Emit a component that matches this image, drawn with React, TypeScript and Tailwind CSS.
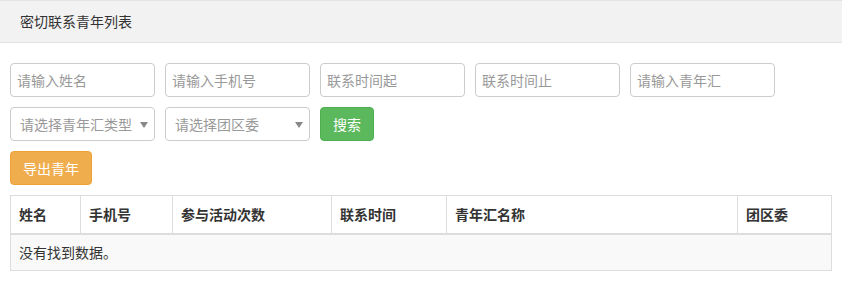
import React from "react";

const font = { fontFamily: '"Noto Sans CJK SC", "Liberation Sans", sans-serif' };

function TextBox({ placeholder }: { placeholder: string }) {
  return (
    <input
      type="text"
      placeholder={placeholder}
      className="h-[34px] w-[145px] rounded-[4px] border border-[#ccc] bg-white px-[6px] text-[14px] text-[#555] outline-none placeholder:text-[#999]"
    />
  );
}

function SelectBox({ label }: { label: string }) {
  return (
    <div className="flex h-[34px] w-[145px] items-center justify-between rounded-[4px] border border-[#ccc] bg-white pl-[9px] pr-[6px] text-[14px] text-[#999]">
      <span>{label}</span>
      <svg width="8" height="6" viewBox="0 0 8 6" className="mt-[1px]">
        <path d="M0 0h8L4 6z" fill="#888" />
      </svg>
    </div>
  );
}

const columns = [
  { title: "姓名", w: "w-[70px]" },
  { title: "手机号", w: "w-[92px]" },
  { title: "参与活动次数", w: "w-[159px]" },
  { title: "联系时间", w: "w-[115px]" },
  { title: "青年汇名称", w: "w-[291px]" },
  { title: "团区委", w: "" },
];

export default function App() {
  return (
    <div className="h-[283px] w-[842px] bg-white text-[14px] text-[#333]" style={font}>
      <div className="flex h-[43px] items-center border-b border-t border-[#e3e3e3] bg-[#f2f2f2] px-5">
        密切联系青年列表
      </div>

      <div className="flex flex-col gap-[10px] px-[10px] pt-5">
        <div className="flex gap-[10px]">
          <TextBox placeholder="请输入姓名" />
          <TextBox placeholder="请输入手机号" />
          <TextBox placeholder="联系时间起" />
          <TextBox placeholder="联系时间止" />
          <TextBox placeholder="请输入青年汇" />
        </div>
        <div className="flex gap-[10px]">
          <SelectBox label="请选择青年汇类型" />
          <SelectBox label="请选择团区委" />
          <button className="h-[34px] w-[54px] rounded-[4px] border border-[#4cae4c] bg-[#5cb85c] text-[14px] text-white">
            搜索
          </button>
        </div>
        <div>
          <button className="h-[34px] w-[82px] rounded-[4px] border border-[#eea236] bg-[#f0ad4e] text-[14px] text-white">
            导出青年
          </button>
        </div>

        <table className="w-[822px] border-collapse border border-[#ddd]">
          <thead>
            <tr className="h-[38px] border-b-2 border-[#ddd]">
              {columns.map((c) => (
                <th
                  key={c.title}
                  className={`${c.w} border border-b-2 border-[#ddd] px-2 text-left font-bold`}
                >
                  {c.title}
                </th>
              ))}
            </tr>
          </thead>
          <tbody>
            <tr className="h-[37px] bg-[#f9f9f9]">
              <td colSpan={6} className="border border-[#ddd] px-2">
                没有找到数据。
              </td>
            </tr>
          </tbody>
        </table>
      </div>
    </div>
  );
}
